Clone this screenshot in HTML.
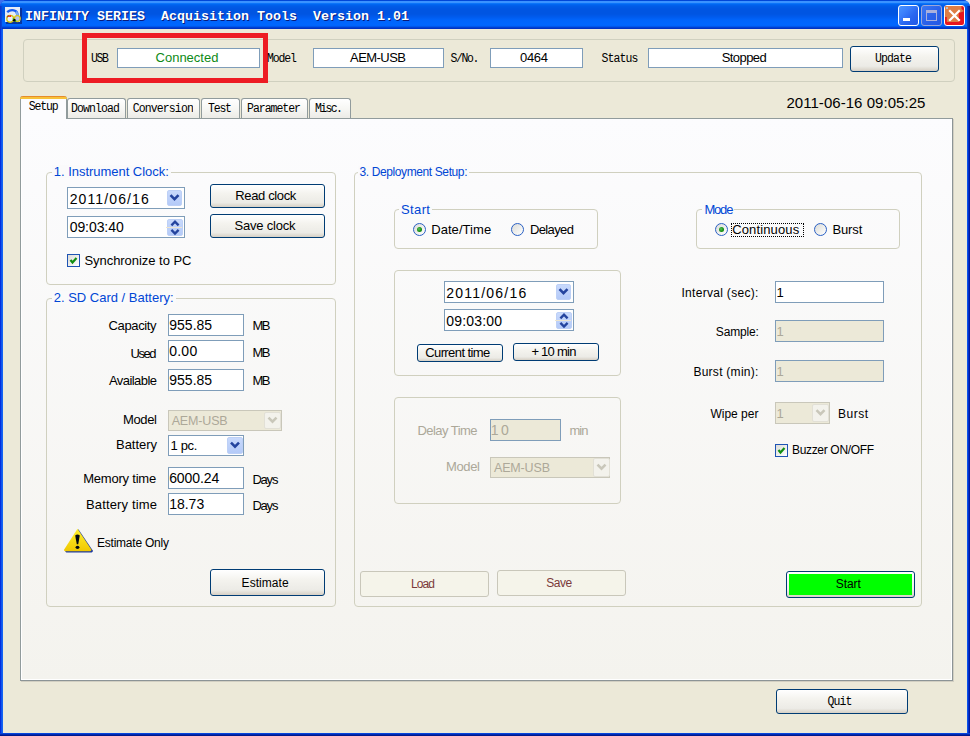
<!DOCTYPE html>
<html><head><meta charset="utf-8">
<style>
html,body{margin:0;padding:0;}
body{width:970px;height:736px;overflow:hidden;background:#ECE9D8;font-family:"Liberation Sans",sans-serif;}
#root{position:relative;width:970px;height:736px;overflow:hidden;}
#root div{position:absolute;box-sizing:border-box;}
#root div.t{white-space:pre;color:#000;}
.tb{border:1px solid #7F9DB9;background:#fff;}
.tbd{border:1px solid #7F9DB9;background:#ECE9D8;}
.cbd{border:1px solid #C9C7BA;background:#ECE9D8;}
.btn{border:1px solid #003C74;border-radius:3px;background:linear-gradient(180deg,#FFFFFF 0%,#F4F3EE 40%,#ECEBE6 80%,#D6D0C5 100%);}
.btnd{border:1px solid #C9C7BA;border-radius:3px;background:#F5F4EA;}
.grp{border:1px solid #D0D0BF;border-radius:4px;}
.tab{border:1px solid #919B9C;border-bottom:none;border-radius:3px 3px 0 0;background:linear-gradient(180deg,#FFFFFF 0%,#F7F7F4 50%,#ECEBE6 100%);}
.dd{border-radius:2px;background:linear-gradient(180deg,#C8D9FC 0%,#B4CAF8 100%);border:1px solid #BDD0F6;overflow:visible;}
.ddd{border-radius:2px;background:#F3F2EC;border:1px solid #E2E0D6;}
.chk{border:1px solid #1E54B4;background:linear-gradient(135deg,#DCDCD7 0%,#FFFFFF 100%);}
.rad{border:1px solid #2A60C4;border-radius:50%;background:linear-gradient(135deg,#DCDCD7 0%,#FFFFFF 100%);}
</style></head><body><div id="root">
<div style="left:0px;top:0px;width:9px;height:9px;background:#3F70EE;"></div>
<div style="left:961px;top:0px;width:9px;height:9px;background:#E2E6EE;"></div>
<div style="left:0px;top:0px;width:970px;height:736px;border-radius:7px 7px 0 0;background:#0831D9;"></div>
<div style="left:0px;top:0px;width:970px;height:29px;border-radius:7px 7px 0 0;background:linear-gradient(180deg,#0046D8 0px,#0046D8 1px,#3A92FF 1px,#3A92FF 3px,#1580FF 3px,#0068F4 4px,#005CE8 6px,#0055E2 9px,#0055E2 14px,#005BEE 17px,#0064FB 20px,#0067FF 25px,#0062F8 26px,#004CDF 27px,#0036C6 28px,#0030C0 29px);"></div>
<div style="left:0px;top:6px;width:2px;height:23px;background:linear-gradient(90deg,#0A34C8,#0A48DC);"></div>
<div style="left:967px;top:6px;width:3px;height:23px;background:linear-gradient(90deg,#0040D0,#0028A8,#001A88);"></div>
<div style="left:0px;top:29px;width:3px;height:704px;background:linear-gradient(90deg,#0019CF 0px,#0842EA 1px,#1666F0 2px,#1160F5 3px);"></div>
<div style="left:967px;top:29px;width:3px;height:704px;background:linear-gradient(90deg,#0E5EF0 0px,#0845E2 1px,#0019B0 2px,#001890 3px);"></div>
<div style="left:0px;top:733px;width:970px;height:3px;background:linear-gradient(180deg,#0A55EE 0px,#0136C8 1px,#001C98 2px,#001480 3px);"></div>
<div style="left:3px;top:29px;width:964px;height:704px;background:#ECE9D8;"></div>
<div style="left:5px;top:7px;width:17px;height:17px;"><svg width="17" height="17" viewBox="0 0 17 17"><rect x="1" y="1" width="16" height="16" fill="#0A2A8A" opacity="0.8"/><rect x="0" y="0" width="15" height="15" fill="#E6ECF6"/><path d="M2.2 5.2 Q6 1.8 10.5 4 Q12.8 5.5 12.6 9.5" stroke="#1A5CF0" stroke-width="2.4" fill="none"/><path d="M10.8 5 Q12.8 6.5 12.6 10" stroke="#7AAAF2" stroke-width="2.2" fill="none"/><circle cx="12.3" cy="11.6" r="2.9" fill="#B8C4EA" stroke="#D8C818" stroke-width="1.3"/><circle cx="5.2" cy="11.8" r="3.4" fill="#E8EEF8" stroke="#D4C410" stroke-width="1.4"/><path d="M2.2 10.2 A3.4 3.4 0 0 1 3.8 8.6" stroke="#A04020" stroke-width="1.2" fill="none"/><path d="M3 9.6 L5.6 8 L6.2 10 Z" fill="#FF0000"/><circle cx="9.3" cy="13.2" r="1.5" fill="#000"/><circle cx="8.2" cy="12" r="0.7" fill="#10A010"/><circle cx="10.6" cy="14" r="0.7" fill="#10A010"/></svg></div>
<div class="t" style="left:25px;top:10px;font-size:13.33px;line-height:13.33px;font-family:'Liberation Mono', monospace;font-weight:700;color:#FFFFFF;text-shadow:1px 1px 0 #0A1A7A;">INFINITY SERIES  Acquisition Tools  Version 1.01</div>
<div style="left:898px;top:5px;width:21px;height:21px;border:1px solid #FFFFFF;border-radius:3px;background:linear-gradient(135deg,#4A94FF 0%,#3C80FC 30%,#2A66F0 60%,#2058E6 100%);"></div>
<div style="left:903px;top:18px;width:7px;height:3px;background:#FFFFFF;"></div>
<div style="left:921px;top:5px;width:21px;height:21px;border:1px solid #9CA6D8;border-radius:3px;background:linear-gradient(135deg,#3A78F4 0%,#2C62EA 50%,#2458E4 100%);"></div>
<div style="left:926px;top:10px;width:11px;height:11px;border:1px solid #AAB0DC;border-top:3px solid #AAB0DC;"></div>
<div style="left:944px;top:5px;width:21px;height:21px;border:1px solid #FFFFFF;border-radius:3px;background:#E8161E;overflow:hidden;"></div>
<div style="left:944px;top:5px;width:21px;height:21px;"><svg width="21" height="21" viewBox="0 0 21 21"><path d="M1 1 H17.5 V4 L19.5 5.5 V6.5 L14.8 8 V17 H2.8 V12 H1 Z" fill="#DE7E45"/><rect x="2" y="2" width="2" height="2" fill="#B8C0C8"/><path d="M6 6 L15 15 M15 6 L6 15" stroke="#FFFFFF" stroke-width="2.2" stroke-linecap="square"/></svg></div>
<div style="left:23px;top:39px;width:932px;height:43px;border:1px solid #D0D0BF;border-radius:4px;"></div>
<div style="left:82px;top:33px;width:186px;height:50px;border:5px solid #ED1C24;"></div>
<div class="t" style="left:91px;top:53px;font-size:11.5px;line-height:11.5px;font-family:'Liberation Mono', monospace;letter-spacing:-1.36px;transform:scaleY(1.15);transform-origin:0 9px;">USB</div>
<div style="left:117px;top:48px;width:143px;height:20px;border:1px solid #7F9DB9;background:#fff;"></div>
<div class="t" style="left:155.5px;top:51px;font-size:13px;line-height:13px;letter-spacing:0.01px;color:#0E8A16;">Connected</div>
<div class="t" style="left:267px;top:53px;font-size:11.5px;line-height:11.5px;font-family:'Liberation Mono', monospace;letter-spacing:-1.13px;transform:scaleY(1.15);transform-origin:0 9px;">Model</div>
<div style="left:313px;top:48px;width:131px;height:20px;border:1px solid #7F9DB9;background:#fff;"></div>
<div class="t" style="left:350px;top:51px;font-size:13px;line-height:13px;letter-spacing:-0.54px;">AEM-USB</div>
<div class="t" style="left:450.5px;top:53px;font-size:11.5px;line-height:11.5px;font-family:'Liberation Mono', monospace;letter-spacing:-1.38px;transform:scaleY(1.15);transform-origin:0 9px;">S/No.</div>
<div style="left:490px;top:48px;width:93px;height:20px;border:1px solid #7F9DB9;background:#fff;"></div>
<div class="t" style="left:520px;top:51px;font-size:13px;line-height:13px;letter-spacing:-0.31px;">0464</div>
<div class="t" style="left:601.4px;top:53px;font-size:11.5px;line-height:11.5px;font-family:'Liberation Mono', monospace;letter-spacing:-0.88px;transform:scaleY(1.15);transform-origin:0 9px;">Status</div>
<div style="left:648px;top:48px;width:195px;height:20px;border:1px solid #7F9DB9;background:#fff;"></div>
<div class="t" style="left:721.7px;top:51px;font-size:13px;line-height:13px;letter-spacing:-0.57px;">Stopped</div>
<div class="btn" style="left:850px;top:46px;width:89px;height:26px;"></div>
<div class="t" style="left:875px;top:53px;font-size:11.5px;line-height:11.5px;font-family:'Liberation Mono', monospace;letter-spacing:-0.88px;transform:scaleY(1.15);transform-origin:0 9px;">Update</div>
<div style="left:20px;top:118px;width:933px;height:563px;border:1px solid #919B9C;border-right-color:#8C9496;border-bottom-color:#8C9496;background:linear-gradient(180deg,#FCFCFE 0%,#F4F3EE 100%);box-shadow:inset 1px -1px 0 #FFFFFF,inset -1px 0 0 #FFFFFF,1px 1px 0 #D2CFC2;"></div>
<div class="tab" style="left:67px;top:98px;width:59px;height:20px;"></div>
<div class="tab" style="left:127px;top:98px;width:73px;height:20px;"></div>
<div class="tab" style="left:201px;top:98px;width:39px;height:20px;"></div>
<div class="tab" style="left:241px;top:98px;width:67px;height:20px;"></div>
<div class="tab" style="left:309px;top:98px;width:42px;height:20px;"></div>
<div style="left:20px;top:96px;width:47px;height:23px;border:1px solid #919B9C;border-top:none;border-bottom:none;border-radius:3px 3px 0 0;background:#FCFCFE;"></div>
<div style="left:21px;top:118px;width:45px;height:2px;background:#FCFCFE;"></div>
<div style="left:20px;top:96px;width:47px;height:3px;border-radius:3px 3px 0 0;background:linear-gradient(180deg,#E68B2C 0px,#E68B2C 1px,#F7C23A 1px,#F7C23A 3px);"></div>
<div class="t" style="left:28.75px;top:101px;font-size:11.5px;line-height:11.5px;font-family:'Liberation Mono', monospace;letter-spacing:-1.13px;transform:scaleY(1.15);transform-origin:0 9px;">Setup</div>
<div class="t" style="left:71px;top:103px;font-size:11.5px;line-height:11.5px;font-family:'Liberation Mono', monospace;letter-spacing:-0.89px;transform:scaleY(1.15);transform-origin:0 9px;">Download</div>
<div class="t" style="left:132.8px;top:103px;font-size:11.5px;line-height:11.5px;font-family:'Liberation Mono', monospace;letter-spacing:-0.89px;transform:scaleY(1.15);transform-origin:0 9px;">Conversion</div>
<div class="t" style="left:208px;top:103px;font-size:11.5px;line-height:11.5px;font-family:'Liberation Mono', monospace;letter-spacing:-1.20px;transform:scaleY(1.15);transform-origin:0 9px;">Test</div>
<div class="t" style="left:247px;top:103px;font-size:11.5px;line-height:11.5px;font-family:'Liberation Mono', monospace;letter-spacing:-1.02px;transform:scaleY(1.15);transform-origin:0 9px;">Parameter</div>
<div class="t" style="left:314.9px;top:103px;font-size:11.5px;line-height:11.5px;font-family:'Liberation Mono', monospace;letter-spacing:-1.63px;transform:scaleY(1.15);transform-origin:0 9px;">Misc.</div>
<div class="t" style="left:786.4px;top:95px;font-size:15px;line-height:15px;letter-spacing:0.05px;">2011-06-16 09:05:25</div>
<div class="grp" style="left:46px;top:172px;width:290px;height:113px;"></div>
<div class="t" style="left:53.8px;top:165px;font-size:13px;line-height:13px;letter-spacing:-0.03px;color:#0046D5;background:#FAFAFB;padding:0 2px;margin-left:-2px;">1. Instrument Clock:</div>
<div class="tb" style="left:67px;top:187px;width:118px;height:22px;"></div>
<div class="dd" style="left:167px;top:190px;width:15px;height:16px;"><svg style="position:absolute;left:-1px;top:-1px" width="15" height="16"><path d="M3.5 5.2 L7.5 9.2 L11.5 5.2" stroke="#24449E" stroke-width="2.6" fill="none"/></svg></div>
<div class="t" style="left:69.7px;top:192px;font-size:14px;line-height:14px;letter-spacing:1.11px;">2011/06/16</div>
<div class="tb" style="left:67px;top:216px;width:118px;height:22px;"></div>
<div class="dd" style="left:167px;top:219px;width:16px;height:17px;"><div style="left:-2px;top:7px;width:16px;height:1px;background:#EDE5D0;"></div><svg style="position:absolute;left:-1px;top:-1px" width="16" height="17"><path d="M4.4 6.3 L8.0 2.7 L11.6 6.3" stroke="#24449E" stroke-width="2.4" fill="none"/><path d="M4.4 10.9 L8.0 14.5 L11.6 10.9" stroke="#24449E" stroke-width="2.4" fill="none"/></svg></div>
<div class="t" style="left:69.7px;top:220px;font-size:14px;line-height:14px;letter-spacing:-0.07px;">09:03:40</div>
<div class="btn" style="left:210px;top:184px;width:115px;height:24px;"></div>
<div class="t" style="left:235.3px;top:189px;font-size:13px;line-height:13px;letter-spacing:-0.37px;">Read clock</div>
<div class="btn" style="left:210px;top:214px;width:115px;height:24px;"></div>
<div class="t" style="left:234.6px;top:219px;font-size:13px;line-height:13px;letter-spacing:-0.21px;">Save clock</div>
<div class="chk" style="left:67px;top:254px;width:13px;height:13px;"><svg style="position:absolute;left:0;top:0" width="11" height="11"><path d="M2.5 5 L4.5 7.5 L8.5 3" stroke="#128E12" stroke-width="2.2" fill="none"/></svg></div>
<div class="t" style="left:84.4px;top:254px;font-size:13px;line-height:13px;letter-spacing:-0.04px;">Synchronize to PC</div>
<div class="grp" style="left:46px;top:298px;width:290px;height:309px;"></div>
<div class="t" style="left:53.7px;top:291px;font-size:13px;line-height:13px;color:#0046D5;background:#FAFAFB;padding:0 2px;margin-left:-2px;">2. SD Card / Battery:</div>
<div class="tb" style="left:168px;top:314px;width:76px;height:22px;"></div>
<div class="t" style="left:169.2px;top:318px;font-size:14px;line-height:14px;letter-spacing:0.03px;">955.85</div>
<div class="t" style="left:108.6px;top:319px;font-size:13px;line-height:13px;letter-spacing:-0.37px;">Capacity</div>
<div class="t" style="left:252.4px;top:319px;font-size:13px;line-height:13px;letter-spacing:-1.50px;">MB</div>
<div class="tb" style="left:168px;top:340px;width:76px;height:22px;"></div>
<div class="t" style="left:169.2px;top:344px;font-size:14px;line-height:14px;letter-spacing:0.25px;">0.00</div>
<div class="t" style="left:130.5px;top:347px;font-size:13px;line-height:13px;letter-spacing:-1.45px;">Used</div>
<div class="t" style="left:252.4px;top:346px;font-size:13px;line-height:13px;letter-spacing:-1.50px;">MB</div>
<div class="tb" style="left:168px;top:369px;width:76px;height:22px;"></div>
<div class="t" style="left:169.2px;top:373px;font-size:14px;line-height:14px;letter-spacing:0.03px;">955.85</div>
<div class="t" style="left:109px;top:374px;font-size:13px;line-height:13px;letter-spacing:-0.57px;">Available</div>
<div class="t" style="left:252.4px;top:374px;font-size:13px;line-height:13px;letter-spacing:-1.50px;">MB</div>
<div class="cbd" style="left:168px;top:410px;width:114px;height:21px;"></div>
<div class="ddd" style="left:264px;top:412px;width:17px;height:17px;"><svg style="position:absolute;left:-1px;top:-1px" width="17" height="17"><path d="M4.5 5.7 L8.5 9.7 L12.5 5.7" stroke="#C9C7BA" stroke-width="2.6" fill="none"/></svg></div>
<div class="t" style="left:171.7px;top:415px;font-size:12.5px;line-height:12.5px;letter-spacing:-0.16px;color:#ACA899;">AEM-USB</div>
<div class="t" style="left:123px;top:413px;font-size:13px;line-height:13px;letter-spacing:-0.36px;">Model</div>
<div class="tb" style="left:168px;top:435px;width:76px;height:21px;"></div>
<div class="dd" style="left:227px;top:437px;width:16px;height:17px;"><svg style="position:absolute;left:-1px;top:-1px" width="16" height="17"><path d="M4.0 5.7 L8.0 9.7 L12.0 5.7" stroke="#24449E" stroke-width="2.6" fill="none"/></svg></div>
<div class="t" style="left:170.4px;top:439px;font-size:13px;line-height:13px;letter-spacing:-0.30px;">1 pc.</div>
<div class="t" style="left:116px;top:438px;font-size:13px;line-height:13px;letter-spacing:-0.03px;">Battery</div>
<div class="tb" style="left:168px;top:467px;width:76px;height:22px;"></div>
<div class="t" style="left:169.2px;top:471px;font-size:14px;line-height:14px;letter-spacing:-0.10px;">6000.24</div>
<div class="t" style="left:83.2px;top:472px;font-size:13px;line-height:13px;letter-spacing:-0.21px;">Memory time</div>
<div class="t" style="left:252.4px;top:473px;font-size:13px;line-height:13px;letter-spacing:-1.21px;">Days</div>
<div class="tb" style="left:168px;top:493px;width:76px;height:22px;"></div>
<div class="t" style="left:169.2px;top:497px;font-size:14px;line-height:14px;letter-spacing:-0.01px;">18.73</div>
<div class="t" style="left:86px;top:498px;font-size:13px;line-height:13px;letter-spacing:0.15px;">Battery time</div>
<div class="t" style="left:252.4px;top:499px;font-size:13px;line-height:13px;letter-spacing:-1.21px;">Days</div>
<div style="left:63px;top:527px;width:31px;height:27px;"><svg width="31" height="27" viewBox="0 0 31 27"><defs><linearGradient id="yg" x1="0" y1="0" x2="0" y2="1"><stop offset="0" stop-color="#FFF030"/><stop offset="1" stop-color="#F0C800"/></linearGradient></defs><path d="M15.4 2.2 L29.6 23.2 Q30.4 25.2 28.6 25.4 L3.4 25.4 Q1.8 25.2 2.4 23.6 Z" fill="#1E3A9E"/><path d="M14.5 1.8 L28.3 22.6 Q28.8 24 27.3 24.2 L2.2 24.2 Q0.6 24 1.2 22.4 Z" fill="url(#yg)"/><path d="M12.2 8.6 Q14.4 6.6 16.8 8.6 L15.2 17.2 L13.8 17.2 Z" fill="#000814"/><ellipse cx="14.5" cy="20.3" rx="1.9" ry="1.6" fill="#000814"/></svg></div>
<div class="t" style="left:97px;top:537px;font-size:12px;line-height:12px;letter-spacing:-0.23px;">Estimate Only</div>
<div class="btn" style="left:210px;top:569px;width:115px;height:27px;"></div>
<div class="t" style="left:241.6px;top:577px;font-size:12px;line-height:12px;letter-spacing:0.04px;">Estimate</div>
<div class="grp" style="left:354px;top:172px;width:568px;height:435px;"></div>
<div class="t" style="left:359.5px;top:166px;font-size:12px;line-height:12px;letter-spacing:-0.39px;color:#0046D5;background:#FAFAFB;padding:0 2px;margin-left:-2px;">3. Deployment Setup:</div>
<div class="grp" style="left:394px;top:209px;width:204px;height:40px;"></div>
<div class="t" style="left:401px;top:203px;font-size:13px;line-height:13px;letter-spacing:0.38px;color:#0046D5;background:#FAFAFB;padding:0 2px;margin-left:-2px;">Start</div>
<div class="rad" style="left:413px;top:223px;width:13px;height:13px;"><div style="left:3px;top:3px;width:5px;height:5px;border-radius:50%;background:radial-gradient(circle at 40% 40%,#5CC05C 0%,#139013 55%,#0C7A0C 100%);"></div></div>
<div class="t" style="left:431.2px;top:223px;font-size:13px;line-height:13px;letter-spacing:0.06px;">Date/Time</div>
<div class="rad" style="left:511px;top:223px;width:13px;height:13px;"></div>
<div class="t" style="left:529.9px;top:223px;font-size:13px;line-height:13px;letter-spacing:-0.62px;">Delayed</div>
<div class="grp" style="left:394px;top:270px;width:227px;height:106px;"></div>
<div class="tb" style="left:444px;top:281px;width:130px;height:22px;"></div>
<div class="dd" style="left:556px;top:284px;width:15px;height:16px;"><svg style="position:absolute;left:-1px;top:-1px" width="15" height="16"><path d="M3.5 5.2 L7.5 9.2 L11.5 5.2" stroke="#24449E" stroke-width="2.6" fill="none"/></svg></div>
<div class="t" style="left:446.2px;top:286px;font-size:14px;line-height:14px;letter-spacing:1.22px;">2011/06/16</div>
<div class="tb" style="left:444px;top:309px;width:130px;height:22px;"></div>
<div class="dd" style="left:556px;top:312px;width:16px;height:17px;"><div style="left:-2px;top:7px;width:16px;height:1px;background:#EDE5D0;"></div><svg style="position:absolute;left:-1px;top:-1px" width="16" height="17"><path d="M4.4 6.3 L8.0 2.7 L11.6 6.3" stroke="#24449E" stroke-width="2.4" fill="none"/><path d="M4.4 10.9 L8.0 14.5 L11.6 10.9" stroke="#24449E" stroke-width="2.4" fill="none"/></svg></div>
<div class="t" style="left:446.2px;top:314px;font-size:14px;line-height:14px;letter-spacing:0.21px;">09:03:00</div>
<div class="btn" style="left:417px;top:344px;width:86px;height:18px;"></div>
<div class="t" style="left:425.2px;top:346px;font-size:13px;line-height:13px;letter-spacing:-0.59px;">Current time</div>
<div class="btn" style="left:513px;top:343px;width:86px;height:18px;"></div>
<div class="t" style="left:531.4px;top:345px;font-size:13px;line-height:13px;letter-spacing:-0.75px;">+ 10 min</div>
<div class="grp" style="left:696px;top:209px;width:204px;height:40px;"></div>
<div class="t" style="left:704.4px;top:203px;font-size:13px;line-height:13px;letter-spacing:-1.18px;color:#0046D5;background:#FAFAFB;padding:0 2px;margin-left:-2px;">Mode</div>
<div class="rad" style="left:715px;top:223px;width:13px;height:13px;"><div style="left:3px;top:3px;width:5px;height:5px;border-radius:50%;background:radial-gradient(circle at 40% 40%,#5CC05C 0%,#139013 55%,#0C7A0C 100%);"></div></div>
<div style="left:731px;top:223px;width:73px;height:14px;border:1px dotted #000;"></div>
<div class="t" style="left:732.2px;top:223px;font-size:13px;line-height:13px;letter-spacing:0.14px;">Continuous</div>
<div class="rad" style="left:814px;top:223px;width:13px;height:13px;"></div>
<div class="t" style="left:832.4px;top:223px;font-size:13px;line-height:13px;letter-spacing:-0.09px;">Burst</div>
<div class="t" style="left:681.4px;top:287px;font-size:12px;line-height:12px;letter-spacing:0.31px;">Interval (sec):</div>
<div class="tb" style="left:775px;top:281px;width:109px;height:22px;"></div>
<div class="t" style="left:776.5px;top:286px;font-size:13px;line-height:13px;">1</div>
<div class="t" style="left:715.8px;top:326px;font-size:12px;line-height:12px;letter-spacing:-0.17px;">Sample:</div>
<div class="tbd" style="left:775px;top:320px;width:109px;height:22px;"></div>
<div class="t" style="left:776.5px;top:325px;font-size:13px;line-height:13px;color:#ACA899;">1</div>
<div class="t" style="left:693.4px;top:366px;font-size:12px;line-height:12px;letter-spacing:0.27px;">Burst (min):</div>
<div class="tbd" style="left:775px;top:360px;width:109px;height:22px;"></div>
<div class="t" style="left:776.5px;top:365px;font-size:13px;line-height:13px;color:#ACA899;">1</div>
<div class="t" style="left:710.4px;top:408px;font-size:12px;line-height:12px;">Wipe per</div>
<div class="cbd" style="left:775px;top:402px;width:55px;height:22px;"></div>
<div class="ddd" style="left:812px;top:404px;width:17px;height:18px;"><svg style="position:absolute;left:-1px;top:-1px" width="17" height="18"><path d="M4.5 6.2 L8.5 10.2 L12.5 6.2" stroke="#C9C7BA" stroke-width="2.6" fill="none"/></svg></div>
<div class="t" style="left:776.4px;top:407px;font-size:13px;line-height:13px;color:#ACA899;">1</div>
<div class="t" style="left:838px;top:408px;font-size:12px;line-height:12px;letter-spacing:0.50px;">Burst</div>
<div class="chk" style="left:775px;top:444px;width:13px;height:13px;"><svg style="position:absolute;left:0;top:0" width="11" height="11"><path d="M2.5 5 L4.5 7.5 L8.5 3" stroke="#128E12" stroke-width="2.2" fill="none"/></svg></div>
<div class="t" style="left:792px;top:444px;font-size:12px;line-height:12px;letter-spacing:-0.33px;">Buzzer ON/OFF</div>
<div style="left:786px;top:571px;width:129px;height:27px;border:1px solid #003C74;border-radius:3px;background:linear-gradient(180deg,#FFFFFF 0%,#F0F0EA 70%,#D8D2C6 100%);"></div>
<div style="left:789px;top:574px;width:123px;height:21px;background:#00FF00;"></div>
<div class="t" style="left:835.8px;top:578px;font-size:12px;line-height:12px;letter-spacing:-0.09px;">Start</div>
<div class="grp" style="left:394px;top:397px;width:227px;height:107px;"></div>
<div class="t" style="left:417.5px;top:424px;font-size:13px;line-height:13px;letter-spacing:-0.56px;color:#ACA899;">Delay Time</div>
<div class="tbd" style="left:490px;top:419px;width:71px;height:22px;"></div>
<div class="t" style="left:490.8px;top:423px;font-size:14px;line-height:14px;letter-spacing:2.42px;color:#ACA899;">10</div>
<div class="t" style="left:569.4px;top:424px;font-size:13px;line-height:13px;letter-spacing:-0.98px;color:#ACA899;">min</div>
<div class="t" style="left:446px;top:460px;font-size:13px;line-height:13px;letter-spacing:-0.36px;color:#ACA899;">Model</div>
<div class="cbd" style="left:490px;top:457px;width:120px;height:21px;"></div>
<div class="ddd" style="left:593px;top:458px;width:17px;height:19px;"><svg style="position:absolute;left:-1px;top:-1px" width="17" height="19"><path d="M4.5 6.7 L8.5 10.7 L12.5 6.7" stroke="#C9C7BA" stroke-width="2.6" fill="none"/></svg></div>
<div class="t" style="left:494px;top:462px;font-size:12.5px;line-height:12.5px;letter-spacing:-0.16px;color:#ACA899;">AEM-USB</div>
<div class="btnd" style="left:360px;top:571px;width:129px;height:26px;"></div>
<div class="t" style="left:411px;top:578px;font-size:12px;line-height:12px;letter-spacing:-0.90px;color:#7B3A3A;">Load</div>
<div class="btnd" style="left:497px;top:570px;width:129px;height:26px;"></div>
<div class="t" style="left:546.3px;top:577px;font-size:12px;line-height:12px;letter-spacing:-0.45px;color:#7B3A3A;">Save</div>
<div class="btn" style="left:776px;top:689px;width:132px;height:25px;"></div>
<div class="t" style="left:827.5px;top:696px;font-size:11.5px;line-height:11.5px;font-family:'Liberation Mono', monospace;letter-spacing:-0.87px;transform:scaleY(1.15);transform-origin:0 9px;">Quit</div>
</div></body></html>
